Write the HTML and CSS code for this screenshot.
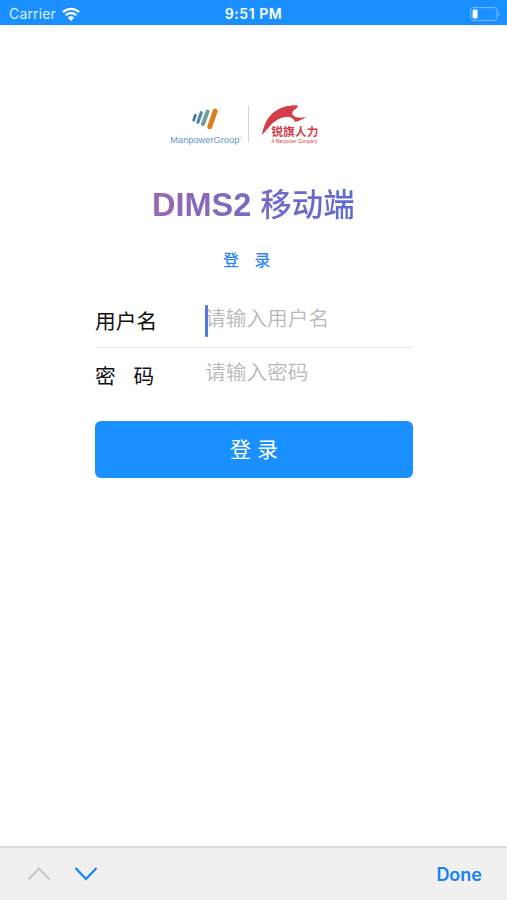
FILE: index.html
```
<!DOCTYPE html>
<html lang="zh-CN">
<head>
    <meta charset="UTF-8">
    <title>DIMS2 移动端</title>
    <link rel="stylesheet" href="styles.css">
</head>
<body>
    <header class="status-bar">
        <div class="carrier">
            <span>Carrier</span>
            <svg class="wifi" viewBox="0 0 18 14" width="18" height="14">
                <path d="M1 5.2a11.5 11.5 0 0 1 16 0M3.800 8.200a7.400 7.400 0 0 1 10.400 0" fill="none" stroke="#fff" stroke-width="2.3"/>
                <path d="M9 14l-3.200-3.400a4.600 4.600 0 0 1 6.400 0z" fill="#fff"/>
            </svg>
        </div>
        <div class="time">9:51 PM</div>
        <div class="battery">
            <svg viewBox="0 0 31 14" width="31" height="14">
                <rect x="0.6" y="0.6" width="26.5" height="12.8" rx="3" fill="none" stroke="#7cbfff" stroke-width="1"/>
                <rect x="2.6" y="2.6" width="5" height="8.8" rx="1.5" fill="#fff"/>
                <path d="M28.5 4.8q2 2.2 0 4.4z" fill="#7cbfff"/>
            </svg>
        </div>
    </header>

    <main class="login">
        <div class="logos">
            <svg viewBox="170 103 72 45" width="72" height="45">
                <g fill="none" stroke-linecap="round">
                    <path d="M193.600 120.200l1.800-5" stroke="#41749f" stroke-width="2.6"/>
                    <path d="M197.900 122.300l3.400-9.600" stroke="#4f86b5" stroke-width="3.2"/>
                    <path d="M203 124l4.600-12.500" stroke="#6f9f9d" stroke-width="4"/>
                    <path d="M209.800 126.800l5.300-15.700" stroke="#df7f1c" stroke-width="5"/>
                </g>
                <text class="manpower" x="170.3" y="143.3" textLength="69" lengthAdjust="spacingAndGlyphs">ManpowerGroup</text>
                <circle cx="240.3" cy="137.5" r="0.5" fill="#6ba0c8"/>
            </svg>
            <div class="separator"></div>
            <svg viewBox="62 25 180 135" width="60" height="45">
                <path d="M65 121C68 101 76 76 92 60C112 41 140 30 170 32C175 34 173 38 167 42C158 47 154 53 157 60C162 69 178 71 197 67C187 75 175 79 164 82C163 75 155 68 142 66C123 66 103 77 89 94C80 104 73 113 65 121Z" fill="#d23f49"/>
                <text class="ruiqi" x="93" y="124" textLength="141">锐旗人力</text>
                <text class="tagline" x="93" y="144" textLength="139" lengthAdjust="spacingAndGlyphs">A Manpower Company</text>
            </svg>
        </div>
        <h1>DIMS2 <span class="title-cn">移动端</span></h1>
        <h2>登 录</h2>
        <form class="form">
            <div class="field">
                <label for="username">用户名</label>
                <div class="control focused">
                    <input id="username" type="text" placeholder="请输入用户名">
                </div>
            </div>
            <div class="field">
                <label class="password-label" for="password">密 码</label>
                <div class="control">
                    <input id="password" type="password" placeholder="请输入密码">
                </div>
            </div>
            <button type="button">登 录</button>
        </form>
    </main>

    <footer class="keyboard-bar">
        <svg viewBox="0 0 24 14" width="24" height="14">
            <path d="M1.5 12.500L12 1.500l10.500 11" fill="none" stroke="#c6c6c6" stroke-width="1.9"/>
        </svg>
        <svg viewBox="0 0 24 14" width="24" height="14">
            <path d="M1.500 1L12 12L22.500 1" fill="none" stroke="#1680f5" stroke-width="2.1"/>
        </svg>
        <span class="done">Done</span>
    </footer>
</body>
</html>
```
FILE: styles.css
```
* {
    box-sizing: border-box;
}

body {
    margin: 0;
    height: 100vh;
    display: flex;
    flex-direction: column;
    background: #fff;
    font-family: "Liberation Sans", "Noto Sans CJK SC", sans-serif;
    overflow: hidden;
}

.status-bar {
    height: 25px;
    padding: 2px 6px 0 9px;
    display: grid;
    grid-template-columns: 1fr auto 1fr;
    align-items: center;
    background: #1a8fff;
    color: #fff;
    font-family: Inter, sans-serif;
    font-size: 14px;
}

.carrier {
    display: flex;
    align-items: center;
    gap: 6px;
    letter-spacing: 0.15px;
    color: #dcefff;
}

.time {
    margin-right: 3px;
    font-size: 14px;
    font-weight: 600;
    letter-spacing: 0.55px;
}

.battery {
    display: flex;
    justify-content: flex-end;
}

.login {
    flex: 1;
    width: 318px;
    margin: 0 auto 0 95px;
    padding-top: 78px;
}

.logos {
    display: flex;
    padding-left: 75px;
    height: 45px;
}

.separator {
    width: 1px;
    height: 36px;
    margin: 3px 12px 0 6px;
    background: #d5d5d5;
}

.manpower {
    font-size: 9.5px;
    fill: #5c97c4;
}

.ruiqi {
    font-family: "Noto Sans CJK SC", sans-serif;
    font-size: 35px;
    font-weight: 700;
    fill: #d23f49;
}

.tagline {
    font-size: 14px;
    fill: #d23f49;
}

h1 {
    width: 206px;
    height: 46px;
    margin: 34px 0 0 57px;
    font-size: 32.5px;
    line-height: 46px;
    white-space: nowrap;
    color: transparent;
    background: linear-gradient(90deg, #9867b3, #5a6bd2);
    -webkit-background-clip: text;
    background-clip: text;
}

.title-cn {
    font-size: 31.5px;
    font-weight: 500;
}

h2 {
    height: 24px;
    margin: 21px 0 0 128px;
    font-size: 16px;
    font-weight: 500;
    line-height: 24px;
    word-spacing: 11px;
    color: #2f86f6;
}

.form {
    margin-top: 21px;
}

.field {
    display: flex;
    height: 54px;
    align-items: center;
}

.field:first-child {
    border-bottom: 1px solid #ededed;
}

label {
    width: 110px;
    padding-bottom: 1px;
    font-size: 20.7px;
    color: #111;
}

.password-label {
    word-spacing: 12px;
}

.control {
    position: relative;
    flex: 1;
    height: 32px;
}

/* text caret of the active field */
.focused::before {
    content: "";
    position: absolute;
    left: 0;
    top: 0;
    width: 2.5px;
    height: 32px;
    border-radius: 1px;
    background: #5478e4;
}

input {
    width: 100%;
    height: 27px;
    padding: 0;
    border: 0;
    outline: 0;
    background: transparent;
    font: 350 20.7px/27px "Liberation Sans", "Noto Sans CJK SC", sans-serif;
}

input::placeholder {
    color: #b8b8b8;
}

button {
    display: block;
    width: 318px;
    height: 57px;
    margin-top: 19px;
    padding: 0 0 4px;
    border: 0;
    border-radius: 6px;
    background: #1a8fff;
    color: #fff;
    font: 21px "Liberation Sans", "Noto Sans CJK SC", sans-serif;
}

.keyboard-bar {
    height: 54px;
    padding: 0 25px 0 27px;
    display: flex;
    align-items: center;
    gap: 23px;
    border-top: 2px solid #dedede;
    background: #f0f0f0;
}

.done {
    margin-left: auto;
    font-family: Inter, sans-serif;
    font-size: 18px;
    font-weight: 600;
    color: #1680f5;
}
```
